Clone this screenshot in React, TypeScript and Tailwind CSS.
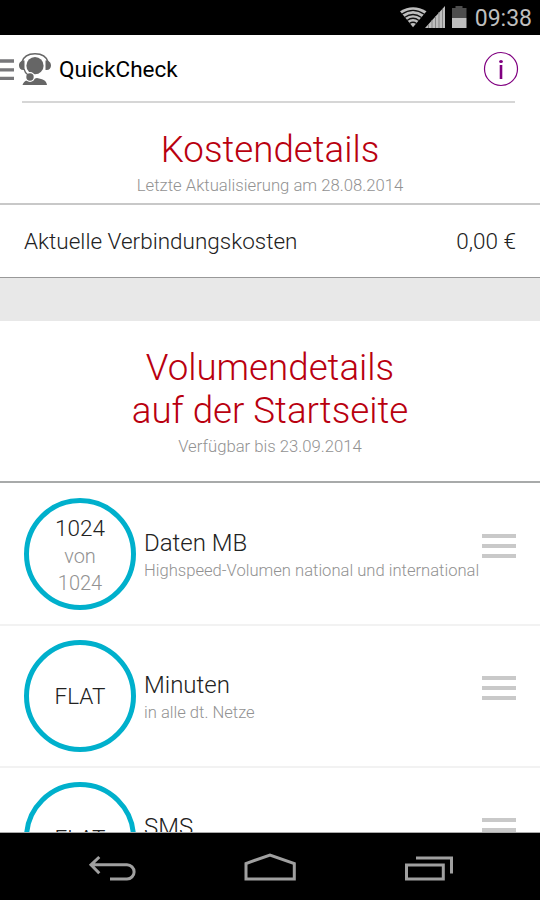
import React from "react";

function StatusIcons() {
  return (
    <svg width="70" height="35" viewBox="0 0 70 35" className="mr-[6px] shrink-0">
      <path d="M1 11.300Q14 3 27.500 11.300L14 27.300Z" fill="#bebebe" />
      <g fill="none" stroke="#111" strokeWidth="1.300">
        <path d="M2.700 14.200Q14 6.500 25.300 14.200" />
        <path d="M5.500 17.500Q14 11.500 22.500 17.500" />
        <path d="M8 20.500Q14 16 20 20.500" />
        <path d="M10.500 23.500Q14 21 17.500 23.500" />
      </g>
      <path d="M26 28L46 6V28Z" fill="#bebebe" />
      <path d="M29.500 28V24M33 28V20M36.500 28V16M40 28V12M43.500 28V9" stroke="#858585" strokeWidth="1" />
      <path d="M53 8H56.500V6H63.500V8H67.500V18H53Z" fill="#4d4d4d" />
      <path d="M53 18H67.500V28H53Z" fill="#bebebe" />
    </svg>
  );
}

function Header() {
  return (
    <header className="flex h-[68px] shrink-0 flex-col font-normal">
      <div className="flex h-[66px] items-center pr-[22px]">
        <svg width="52" height="42" viewBox="0 48 52 42" className="mt-[2px] shrink-0">
          <path d="M0 61H14M0 69.800H14M0 78.300H14" stroke="#77777a" strokeWidth="3.300" />
          <circle cx="35" cy="65.700" r="8.600" fill="#666" />
          <path d="M22 62C23.500 56.500 28.500 53.700 35 53.700S46.500 56.500 48 62" fill="none" stroke="#666" strokeWidth="1.600" />
          <path d="M24.500 60.500V70C21 70.500 19 68.500 19 65.500S21 60.500 24.500 60.500ZM45.500 60.500V70C49 70.500 51 68.500 51 65.500S49 60.500 45.500 60.500Z" fill="#666" />
          <path d="M22.500 85C24 80.500 28 79.500 31 79.500L37 78C43 79 46.500 80.500 47 85Z" fill="#666" />
          <circle cx="30" cy="77" r="5" fill="#fff" />
          <path d="M24 69Q25 73 28 75" fill="none" stroke="#666" strokeWidth="1.300" />
          <circle cx="30" cy="77" r="3.700" fill="#666" />
        </svg>
        <h1 className="ml-[7px] flex-1 pt-[4px] text-[22.500px] text-black">QuickCheck</h1>
        <svg width="36" height="36" viewBox="0 0 36 36" className="mt-[2px] -mr-[1px]">
          <circle cx="18" cy="18" r="16.500" fill="none" stroke="#800080" strokeWidth="1.200" />
          <rect x="16.700" y="14" width="2.600" height="14" fill="#800080" />
          <ellipse cx="18" cy="10.500" rx="1.900" ry="1.600" fill="#800080" />
        </svg>
      </div>
      <div className="mr-[25px] ml-[22px] h-[2px] bg-[#d6d6d6]" />
    </header>
  );
}

function Handle() {
  return (
    <div className="mr-6 flex w-[34px] shrink-0 flex-col gap-[6px]">
      <div className="h-1 bg-[#c9c9c9]" />
      <div className="h-1 bg-[#c9c9c9]" />
      <div className="h-1 bg-[#c9c9c9]" />
    </div>
  );
}

function VolumeRow({ title, note, children }: { title: string; note?: string; children: React.ReactNode }) {
  return (
    <div className="flex h-[142px] shrink-0 items-start border-b-2 border-[#f2f2f2] pt-[14px]">
      <div className="ml-6 flex size-28 shrink-0 flex-col items-center justify-center rounded-full border-[5.500px] border-[#00b0cc] text-[22.500px] leading-[27px] text-[#222]">
        {children}
      </div>
      <div className="ml-2 min-w-0 flex-1 pt-[31px] whitespace-nowrap">
        <div className="text-[24px] leading-[28px] text-[#222]">{title}</div>
        <div className="pt-px text-[16.600px] leading-[26px] text-[#929292]">{note}</div>
      </div>
      <div className="pt-[36px]">
        <Handle />
      </div>
    </div>
  );
}

function NavBar() {
  return (
    <nav className="h-[67px] shrink-0 bg-black">
      <svg width="540" height="67" viewBox="0 833 540 67" fill="none" stroke="#a0a0a0" strokeWidth="3">
        <path d="M91 864.800H127A7 7 0 0 1 127 879H110M99.300 857L91 864.800L99.300 873.300" />
        <path d="M246 879V863.500L270 855L294.300 863.500V879Z" />
        <path d="M406.500 865H443.300V879H406.500ZM416 858H451.500V873.500" />
      </svg>
    </nav>
  );
}

export default function App() {
  return (
    <div className="flex h-[900px] w-[540px] flex-col overflow-hidden bg-white font-['Roboto',sans-serif] font-light">
      <div className="flex h-[35px] shrink-0 items-center justify-end bg-black pr-[8px] text-[23px] font-normal text-[#bebebe]">
        <StatusIcons />
        <span className="pt-[4px]">09:38</span>
      </div>
      <main className="flex h-[797px] shrink-0 flex-col overflow-hidden">
        <Header />
        <section className="flex h-[102px] shrink-0 flex-col items-center border-b-2 border-[#c8c8c8] pt-[25px]">
          <h2 className="text-[36.700px] leading-[43px] text-[#b9000f]">Kostendetails</h2>
          <p className="mt-[5px] text-[16.700px] leading-[20px] text-[#929292]">Letzte Aktualisierung am 28.08.2014</p>
        </section>
        <div className="flex h-[73px] shrink-0 items-center justify-between border-b border-[#999] px-6 pt-px text-[22.500px] text-[#222]">
          <span>Aktuelle Verbindungskosten</span>
          <span>0,00 €</span>
        </div>
        <div className="h-[43px] shrink-0 bg-[#e8e8e8]" />
        <section className="flex h-[162px] shrink-0 flex-col items-center border-b-2 border-[#a8aaaa] pt-[25px] text-center">
          <h2 className="text-[36.700px] leading-[43px] text-[#b9000f]">
            Volumendetails
            <br />
            auf der Startseite
          </h2>
          <p className="mt-[5px] text-[16.700px] leading-[20px] text-[#929292]">Verfügbar bis 23.09.2014</p>
        </section>
        <div className="flex shrink-0 flex-col pt-px">
          <VolumeRow title="Daten MB" note="Highspeed-Volumen national und international">
            <span className="pt-[3px]">1024</span>
            <span className="pt-px text-[20px] text-[#929292]">von</span>
            <span className="text-[20px] text-[#929292]">1024</span>
          </VolumeRow>
          <VolumeRow title="Minuten" note="in alle dt. Netze">
            <span>FLAT</span>
          </VolumeRow>
          <VolumeRow title="SMS">
            <span>FLAT</span>
          </VolumeRow>
        </div>
      </main>
      <div className="h-px shrink-0 bg-[#aaa]" />
      <NavBar />
    </div>
  );
}
